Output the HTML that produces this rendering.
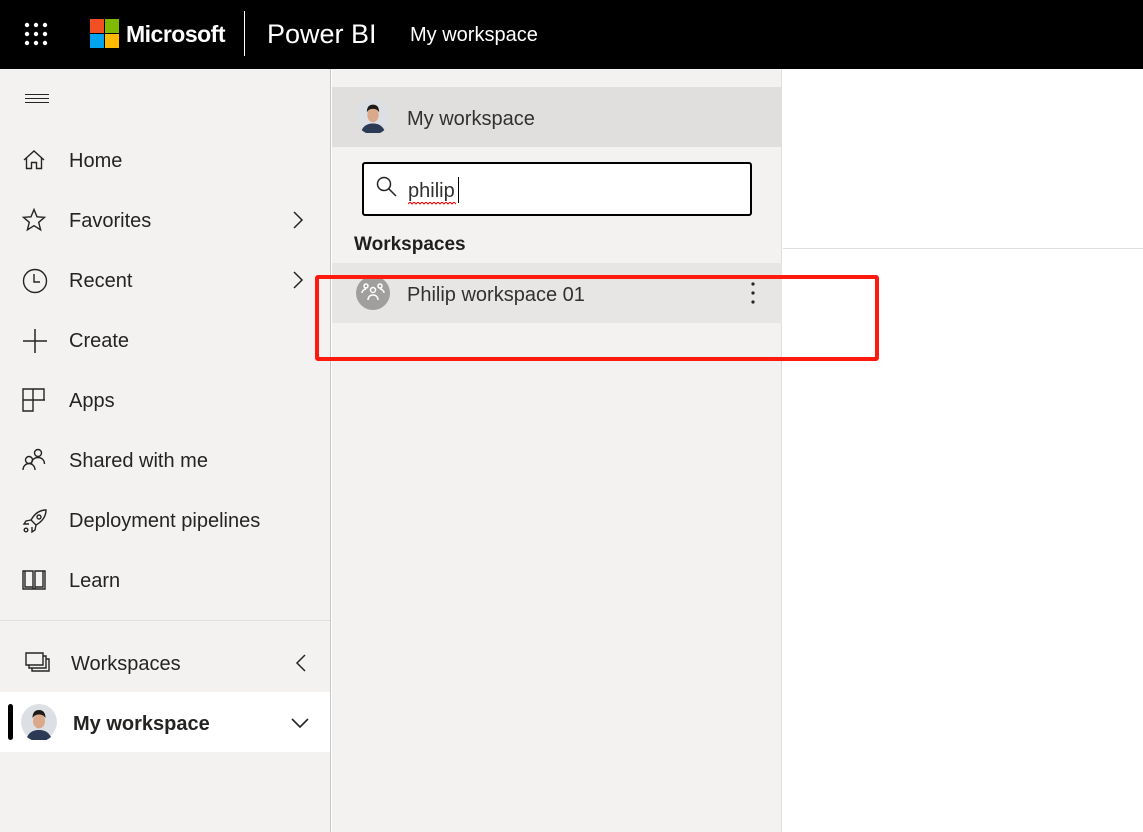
<!DOCTYPE html>
<html><head><meta charset="utf-8"><style>
*{margin:0;padding:0;box-sizing:border-box}
body{width:1143px;height:832px;overflow:hidden;background:#fff;font-family:"Segoe UI","Liberation Sans",sans-serif;color:#252423;position:relative}
.a{position:absolute}
.hdr{left:0;top:0;width:1143px;height:69px;background:#000}
.nav{left:0;top:69px;width:331px;height:763px;background:#f3f2f1;border-right:1px solid #c8c6c4}
.fly{left:332px;top:69px;width:450px;height:763px;background:#f3f2f1;border-right:1px solid #e1dfdd}
.item{position:absolute;left:0;width:330px;height:60px;font-size:20px;line-height:62px}
.item span{position:absolute;left:69px}
.item svg{position:absolute;left:22px;top:18px}
.item svg.chev{left:292px;top:20px}
</style></head><body>
<div class="a hdr">
  <svg class="a" style="left:24px;top:22px" width="24" height="24" viewBox="0 0 24 24" fill="#fff">
    <circle cx="3" cy="3" r="2.2"/><circle cx="12" cy="3" r="2.2"/><circle cx="21" cy="3" r="2.2"/>
    <circle cx="3" cy="12" r="2.2"/><circle cx="12" cy="12" r="2.2"/><circle cx="21" cy="12" r="2.2"/>
    <circle cx="3" cy="21" r="2.2"/><circle cx="12" cy="21" r="2.2"/><circle cx="21" cy="21" r="2.2"/>
  </svg>
  <div class="a" style="left:90px;top:19px;width:14px;height:14px;background:#f25022"></div>
  <div class="a" style="left:105px;top:19px;width:14px;height:14px;background:#7fba00"></div>
  <div class="a" style="left:90px;top:34px;width:14px;height:14px;background:#00a4ef"></div>
  <div class="a" style="left:105px;top:34px;width:14px;height:14px;background:#ffb900"></div>
  <div class="a" style="left:126px;top:17px;font-size:23px;color:#fff;font-weight:bold;letter-spacing:-0.5px;line-height:34px">Microsoft</div>
  <div class="a" style="left:244px;top:11px;width:1px;height:45px;background:#fff"></div>
  <div class="a" style="left:267px;top:15px;font-size:27px;color:#fff;line-height:38px;font-weight:300">Power BI</div>
  <div class="a" style="left:410px;top:20px;font-size:20px;color:#fff;line-height:30px">My workspace</div>
</div>

<div class="a nav">
  <svg class="a" style="left:25px;top:25px" width="24" height="10"><path d="M0 .5H24M0 4.5H24M0 8.5H24" stroke="#252423" stroke-width="1"/></svg>
  <div class="item" style="top:61px"><svg width="24" height="24" viewBox="0 0 24 24" fill="none" stroke="#252423" stroke-width="1.4"><path d="M2 12L12 3l10 9M4.5 10v10.5h5v-6h5v6h5V10"/></svg><span>Home</span></div>
  <div class="item" style="top:121px"><svg width="24" height="24" viewBox="0 0 24 24" fill="none" stroke="#252423" stroke-width="1.4"><path d="M12 1.5l3 7.3 7.6.5-5.9 5 1.9 7.6L12 17.7l-6.6 4.2 1.9-7.6-5.9-5 7.6-.5z"/></svg><span>Favorites</span><svg class="chev" width="12" height="20" viewBox="0 0 12 20" fill="none" stroke="#252423" stroke-width="1.5"><path d="M2 2l8 8-8 8"/></svg></div>
  <div class="item" style="top:181px"><svg width="26" height="26" viewBox="0 0 26 26" fill="none" stroke="#252423" stroke-width="1.4"><circle cx="13" cy="13" r="11.5"/><path d="M12 6v8h6"/></svg><span>Recent</span><svg class="chev" width="12" height="20" viewBox="0 0 12 20" fill="none" stroke="#252423" stroke-width="1.5"><path d="M2 2l8 8-8 8"/></svg></div>
  <div class="item" style="top:241px"><svg width="26" height="26" viewBox="0 0 26 26" fill="none" stroke="#252423" stroke-width="1.5"><path d="M13 1v24M1 13h24"/></svg><span>Create</span></div>
  <div class="item" style="top:301px"><svg width="24" height="24" viewBox="0 0 24 24" fill="none" stroke="#252423" stroke-width="1.4"><path d="M1 1h10v22H1zM1 12h22M11 1h11v11"/></svg><span>Apps</span></div>
  <div class="item" style="top:361px"><svg width="24" height="24" viewBox="0 0 24 24" fill="none" stroke="#252423" stroke-width="1.4"><circle cx="16" cy="5" r="3.5"/><path d="M9.5 16c0-4 3-6.5 6.5-6.5s6.5 2.5 6.5 6.5"/><circle cx="7" cy="12" r="3.5"/><path d="M1 22c0-4 3-6.5 6-6.5s6 2.5 6 6.5"/></svg><span>Shared with me</span></div>
  <div class="item" style="top:421px"><svg width="26" height="26" viewBox="0 0 26 26" fill="none" stroke="#252423" stroke-width="1.4"><path d="M24 2c-6 0-11 3-15 10l5 5c7-4 10-9 10-15z"/><circle cx="17" cy="9" r="2"/><path d="M9 12l-5 1-2 3 5 0M14 17l-1 5-3 2 0-5"/><circle cx="4" cy="22" r="1.8"/></svg><span>Deployment pipelines</span></div>
  <div class="item" style="top:481px"><svg width="24" height="24" viewBox="0 0 24 24" fill="none" stroke="#252423" stroke-width="1.4"><path d="M1 3h10v18H1zM13 3h10v18H13zM3 3v16h8M21 3v16h-8M11 21h2"/></svg><span>Learn</span></div>
  <div class="a" style="left:0;top:551px;width:330px;height:1px;background:#e1dfdd"></div>
  <div class="item" style="top:564px"><svg width="26" height="24" viewBox="0 0 26 24" fill="none" stroke="#252423" stroke-width="1.4" style="left:25px"><path d="M1 2h17v12H1zM4 14v3h17V5h-3M7 17v3h17V8h-3"/></svg><span style="left:71px">Workspaces</span><svg width="12" height="20" viewBox="0 0 12 20" fill="none" stroke="#252423" stroke-width="1.5" style="left:295px;top:20px"><path d="M10 2L2 10l8 8"/></svg></div>
  <div class="a" style="left:0;top:623px;width:330px;height:60px;background:#fff">
    <div class="a" style="left:8px;top:12px;width:5px;height:36px;background:#000;border-radius:3px"></div>
    <svg class="a" style="left:21px;top:12px" width="36" height="36" viewBox="0 0 36 36"><circle cx="18" cy="18" r="18" fill="#dcdfe3"/><path d="M6 33c3-6 8-7 12-7s9 1 12 7a18 18 0 0 1-24 0z" fill="#2d3a55"/><ellipse cx="18" cy="17" rx="6" ry="7.5" fill="#d9a98a"/><path d="M11.5 14c0-6 3-8 6.5-8s6.5 2 6.5 8c-2-3-4-3.5-6.5-3.5S13.5 11 11.5 14z" fill="#1e1a18"/></svg>
    <div class="a" style="left:73px;top:17px;font-size:20px;font-weight:600;line-height:30px">My workspace</div>
    <svg class="a" style="left:290px;top:25px" width="20" height="12" viewBox="0 0 20 12" fill="none" stroke="#252423" stroke-width="1.6"><path d="M2 2l8 8 8-8"/></svg>
  </div>
</div>

<div class="a fly">
  <div class="a" style="left:0;top:18px;width:450px;height:60px;background:#e1dfdd">
    <svg class="a" style="left:24px;top:12px" width="34" height="34" viewBox="0 0 36 36"><circle cx="18" cy="18" r="18" fill="#dcdfe3"/><path d="M6 33c3-6 8-7 12-7s9 1 12 7a18 18 0 0 1-24 0z" fill="#2d3a55"/><ellipse cx="18" cy="17" rx="6" ry="7.5" fill="#d9a98a"/><path d="M11.5 14c0-6 3-8 6.5-8s6.5 2 6.5 8c-2-3-4-3.5-6.5-3.5S13.5 11 11.5 14z" fill="#1e1a18"/></svg>
    <div class="a" style="left:75px;top:17px;font-size:20px;line-height:30px;color:#323130">My workspace</div>
  </div>
  <div class="a" style="left:30px;top:93px;width:390px;height:54px;background:#fff;border:2px solid #000;border-radius:3px">
    <svg class="a" style="left:12px;top:12px" width="22" height="22" viewBox="0 0 22 22" fill="none" stroke="#252423" stroke-width="1.5"><circle cx="8" cy="8" r="6.5"/><path d="M12.8 12.8L20 20"/></svg>
    <div class="a" style="left:44px;top:12px;font-size:20px;line-height:30px;color:#323130">philip</div>
    <svg class="a" style="left:44px;top:38px" width="48" height="4"><path d="M0 2l2-2 2 2 2-2 2 2 2-2 2 2 2-2 2 2 2-2 2 2 2-2 2 2 2-2 2 2 2-2 2 2 2-2 2 2 2-2 2 2 2-2 2 2 2-2 2 2" fill="none" stroke="#e00" stroke-width="1"/></svg>
    <div class="a" style="left:94px;top:13px;width:1px;height:26px;background:#000"></div>
  </div>
  <div class="a" style="left:22px;top:162px;font-size:19px;font-weight:600;line-height:28px;color:#201f1e">Workspaces</div>
  <div class="a" style="left:0;top:194px;width:450px;height:60px;background:#e8e6e4">
    <svg class="a" style="left:24px;top:13px" width="34" height="34" viewBox="0 0 34 34"><circle cx="17" cy="17" r="17" fill="#a19f9d"/><g fill="none" stroke="#fff" stroke-width="1.5"><circle cx="17" cy="14" r="2.5"/><path d="M12 24c0-3 2-5 5-5s5 2 5 5"/><circle cx="10" cy="10" r="2"/><path d="M6 17c0-2 2-4 4-4"/><circle cx="24" cy="10" r="2"/><path d="M28 17c0-2-2-4-4-4"/></g></svg>
    <div class="a" style="left:75px;top:17px;font-size:20px;line-height:30px;color:#323130">Philip workspace 01</div>
    <svg class="a" style="left:418px;top:18px" width="6" height="24"><circle cx="3" cy="3" r="1.6" fill="#252423"/><circle cx="3" cy="12" r="1.6" fill="#252423"/><circle cx="3" cy="21" r="1.6" fill="#252423"/></svg>
  </div>
</div>
<div class="a" style="left:783px;top:248px;width:360px;height:1px;background:#e1dfdd"></div>
<div class="a" style="left:315px;top:275px;width:564px;height:86px;border:4px solid #ff1a0f;border-radius:3px"></div>
</body></html>
